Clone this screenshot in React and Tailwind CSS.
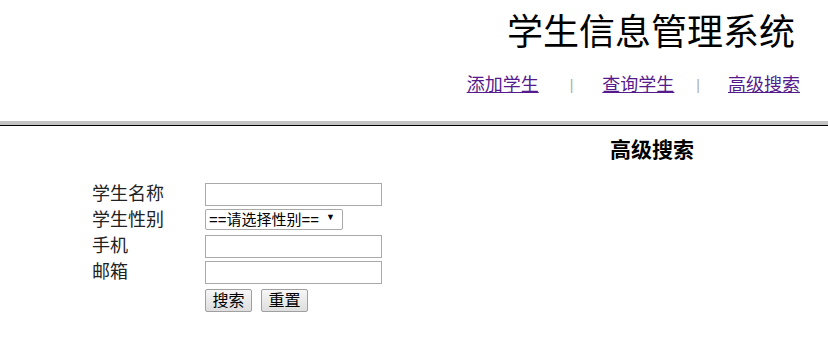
import React from "react";

const LINKS = ["添加学生", "查询学生", "高级搜索"];

function FormRow({ label, children }) {
  return (
    <div className="flex items-center h-[26px]">
      <div className="w-[113px] text-[18px] text-[#222]">{label}</div>
      <div>{children}</div>
    </div>
  );
}

export default function App() {
  return (
    <div className="bg-white w-[828px] h-[344px] font-['Liberation_Sans','Noto_Sans_CJK_SC',sans-serif] text-black">
      <div className="text-right">
        <h1 className="pr-[33px] pt-[9px] text-[36px] leading-[48px] font-['Liberation_Serif','Noto_Sans_CJK_SC',serif]">
          学生信息管理系统
        </h1>
        <div className="pr-[28px] mt-[16px] flex justify-end items-center text-[18px] leading-[24px]">
          <a href="#" className="text-[#551a8b] underline">{LINKS[0]}</a>
          <span className="ml-[31px] mr-[29px] text-[#aaa] text-[14px]">|</span>
          <a href="#" className="text-[#551a8b] underline">{LINKS[1]}</a>
          <span className="ml-[22px] mr-[28px] text-[#aaa] text-[14px]">|</span>
          <a href="#" className="text-[#551a8b] underline">{LINKS[2]}</a>
        </div>
      </div>

      <div className="mt-[24px] border-t-4 border-b border-t-[#c3c3c3] border-b-black" />

      <div className="pl-[476px] text-center pt-[8px]">
        <h2 className="text-[21px] font-bold leading-[28px] font-['Noto_Sans_CJK_SC',sans-serif]">高级搜索</h2>
      </div>

      <div className="pl-[92px] pt-[19px]">
        <FormRow label="学生名称">
          <input className="w-[177px] h-[23px] border border-[#a9a9a9] px-1 text-[14px] outline-none" />
        </FormRow>
        <FormRow label="学生性别">
          <div className="relative w-[138px]">
            <select className="appearance-none w-[138px] h-[21px] border border-[#a9a9a9] rounded-[2px] bg-white pl-[3px] text-[15px] leading-[19px] outline-none">
              <option>==请选择性别==</option>
              <option>男</option>
              <option>女</option>
            </select>
            <span className="absolute right-[8px] top-[5px] text-[9px] leading-none pointer-events-none">▼</span>
          </div>
        </FormRow>
        <FormRow label="手机">
          <input className="w-[177px] h-[23px] border border-[#a9a9a9] px-1 text-[14px] outline-none" />
        </FormRow>
        <FormRow label="邮箱">
          <input className="w-[177px] h-[23px] border border-[#a9a9a9] px-1 text-[14px] outline-none" />
        </FormRow>
        <div className="flex gap-[9px] pl-[113px] pt-[4px]">
          <button className="w-[47px] h-[23px] border border-[#a0a0a0] rounded-[2px] bg-gradient-to-b from-[#f6f6f6] to-[#dedede] text-[16px] leading-[20px]">
            搜索
          </button>
          <button className="w-[47px] h-[23px] border border-[#a0a0a0] rounded-[2px] bg-gradient-to-b from-[#f6f6f6] to-[#dedede] text-[16px] leading-[20px]">
            重置
          </button>
        </div>
      </div>
    </div>
  );
}
